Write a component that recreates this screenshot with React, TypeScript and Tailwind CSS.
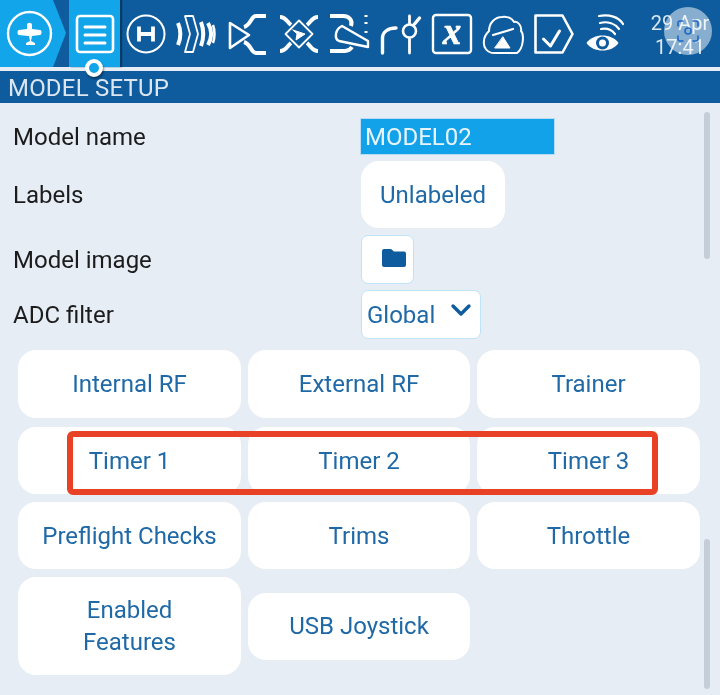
import React from "react";

const Ic = ({ children }: { children: React.ReactNode }) => (
  <div className="w-[51px] h-[67px] flex items-center justify-center shrink-0">
    <svg width="42" height="42" viewBox="0 0 42 42" fill="none" stroke="white" strokeWidth="2.4" strokeLinecap="round" strokeLinejoin="round">
      {children}
    </svg>
  </div>
);

const Btn = ({ t, cls = "h-[67px]" }: { t: React.ReactNode; cls?: string }) => (
  <div className={`bg-white rounded-[18px] flex items-center justify-center text-center text-[#1f69a6] text-[24px] leading-[32px] ${cls}`}>{t}</div>
);

const Row = ({ label, h, children }: { label: string; h: string; children: React.ReactNode }) => (
  <div className={`flex items-center ${h}`}>
    <div className="w-[361px] pl-[13px] pt-[1px] text-[#1c1c1c] text-[24px]">{label}</div>
    {children}
  </div>
);

export default function App() {
  return (
    <div className="relative w-[720px] h-[695px] overflow-hidden bg-[#e6edf5] blur-[0.6px] font-['Roboto',sans-serif]">
      <div className="flex h-[67px] bg-[#0e5c9d]">
        <div className="w-[69px] h-[67px] shrink-0 relative">
          <svg width="69" height="67" viewBox="0 0 69 67">
            <path d="M0 0H53L66 33L53 67H0Z" fill="#12a5ea" />
            <circle cx="29.5" cy="33.5" r="21.5" fill="none" stroke="white" strokeWidth="2.4" />
            <path d="M27 25c0-3 5-3 5 0v4l8 1c2 0 2 5 0 5l-8 1-1 5 4 2v2H26v-2l4-2-1-5-1-0-9-1c-2 0-2-5 0-5l8-1z" fill="white" />
          </svg>
        </div>
        <div className="w-[51px] h-[67px] shrink-0 bg-[#12a5ea] flex items-center justify-center shadow-[2px_0_1px_#0a3a63]">
          <svg width="40" height="40" viewBox="0 0 40 40" fill="none" stroke="white" strokeWidth="2.6" strokeLinecap="round" strokeLinejoin="round">
            <rect x="2" y="2" width="36" height="36" rx="3" />
            <path d="M10 13H30M10 21H30M10 29H30" strokeWidth="3" />
          </svg>
        </div>
        <Ic>
          <circle cx="21" cy="21" r="18.5" strokeWidth="2" />
          <path d="M14 13.5V28.5M28 13.5V28.5M14 21H28" strokeWidth="3.8" strokeLinecap="butt" />
        </Ic>
        <Ic>
          <path d="M2 10C5 17 5 25 2 32" strokeWidth="4" strokeLinecap="butt" />
          <path d="M9 3H17L22 21L17 39H9L14 21Z" strokeWidth="1.8" />
          <path d="M25 9C28 17 28 25 25 33M32 10C36 17 36 25 32 32" strokeWidth="4" strokeLinecap="butt" />
          <path d="M37 12C39 17 39 25 37 30" strokeWidth="2.5" strokeLinecap="butt" />
        </Ic>
        <Ic>
          <path d="M3 10L22 22L3 35Z" strokeWidth="2.6" />
          <path d="M39 3H29C24 3 24 12 17 14M39 40H29C24 40 24 31 17 29" strokeWidth="4" strokeLinecap="butt" />
        </Ic>
        <Ic>
          <path d="M21 7.5L34.5 21L21 34.5L7.5 21Z" strokeWidth="1.8" />
          <path d="M15 17L27 21L18 27L19 21Z" fill="white" strokeWidth="1" />
          <path d="M2 4C8 4 9 9 13 12M40 4C34 4 33 9 29 12M2 38C8 38 9 33 13 30M40 38C34 38 33 33 29 30" strokeWidth="4" strokeLinecap="butt" />
        </Ic>
        <Ic>
          <path d="M1 3H14C20 3 24 7 22 13M1 38H16C19 38 21 37 23 34" strokeWidth="4" strokeLinecap="butt" />
          <path d="M13 13L39 28L39 34L10 28C5 26 6 16 13 13Z" strokeWidth="2.4" />
          <path d="M37 2V4M37 9V11M37 18V20" strokeWidth="3" strokeLinecap="butt" />
        </Ic>
        <Ic>
          <path d="M2.5 40V25C2.5 19 8 15 16 15" strokeWidth="3.4" />
          <circle cx="29.5" cy="18" r="6.5" strokeWidth="2.6" />
          <path d="M29.5 3V10M29.5 26V40" strokeWidth="2.8" />
          <path d="M34.5 11L39.5 5" strokeWidth="3.4" />
        </Ic>
        <Ic>
          <rect x="2" y="2" width="38" height="38" rx="3" strokeWidth="2.4" />
          <text x="21" y="31" textAnchor="middle" fill="white" stroke="white" strokeWidth="0.6" fontFamily="'Liberation Serif',serif" fontWeight="700" fontStyle="italic" fontSize="37">x</text>
        </Ic>
        <Ic>
          <path d="M12 40C5 40 1 34 2 28C2 23 5 20 7 18C7 10 13 4 20 4C26 3 30 6 32 9C36 8 40 13 39 18C42 21 42 35 35 40Z" strokeWidth="2" />
          <path d="M11 22L31 16" strokeWidth="2.2" />
          <path d="M21 24L28 35H13Z" fill="white" strokeWidth="1" />
        </Ic>
        <Ic>
          <path d="M2.5 2.5H29.5L39.5 21L29.5 39.5H2.5Z" strokeWidth="2.6" />
          <path d="M10.5 26L17.5 33L26.5 18" strokeWidth="3" />
        </Ic>
        <Ic>
          <path d="M2.5 30C9 20 28 20 34.5 30C28 40 9 40 2.5 30Z" fill="white" stroke="none" />
          <circle cx="18.5" cy="30" r="6.5" fill="#0e5c9d" stroke="none" />
          <circle cx="18.5" cy="30" r="3.5" fill="white" stroke="none" />
          <path d="M17 16C23 15 28 17 31 21M16 10C24 8 31 11 35 16M15 3C25 1 35 4 39 11" strokeWidth="2.2" />
        </Ic>
        <div className="grow text-white/85 text-[20px] leading-[24px] text-center pt-[11px] pl-[10px]">
          <div>29 Apr</div>
          <div>17:41</div>
        </div>
      </div>
      <div className="h-[4px] bg-[#e6edf5]" />
      <div className="h-[32px] bg-[#0e5c9d] pl-[8px] text-[#dbe6f0] text-[24px] leading-[35px] tracking-[0.2px]">MODEL SETUP</div>

      <div className="pr-[18px] pt-[13px]">
        <Row label="Model name" h="h-[40px]">
          <div className="w-[193px] h-[35px] bg-[#12a2e9] text-[#e8f4fc] text-[24px] leading-[37px] pl-[4px] outline outline-1 outline-[#b8dcf5]">MODEL02</div>
        </Row>
        <div className="h-[5px]" />
        <Row label="Labels" h="h-[67px]">
          <div className="w-[144px] h-[67px] bg-white rounded-[18px] flex items-center justify-center text-[#1f69a6] text-[24px]">Unlabeled</div>
        </Row>
        <div className="h-[6px]" />
        <Row label="Model image" h="h-[50px]">
          <div className="w-[53px] h-[49px] bg-white rounded-[7px] border border-[#bfe3f8] flex items-center pl-[20px]">
            <svg width="24" height="18" viewBox="0 0 24 18" className="mb-[3px] shrink-0">
              <path d="M0 2a2 2 0 012-2h7l3 2.5h10a2 2 0 012 2V16a2 2 0 01-2 2H2a2 2 0 01-2-2z" fill="#0e5c9d" />
            </svg>
          </div>
        </Row>
        <div className="h-[5px]" />
        <Row label="ADC filter" h="h-[50px]">
          <div className="w-[120px] h-[49px] bg-white rounded-[7px] border border-[#bfe3f8] flex items-center justify-between pl-[5px] pr-[8px] text-[#1f69a6] text-[24px]">
            <span className="mt-[2px]">Global</span>
            <svg width="22" height="14" viewBox="0 0 22 14" fill="none" stroke="#0e5c9d" strokeWidth="3.4" strokeLinecap="round" strokeLinejoin="round" className="mb-[8px]">
              <path d="M3 3L11 11L19 3" />
            </svg>
          </div>
        </Row>
      </div>

      <div className="grid grid-cols-[223px_222px_223px] gap-x-[7px] gap-y-[8px] pl-[18px] pt-[11px] items-center">
        <Btn t="Internal RF" cls="h-[68px] mb-[1px]" />
        <Btn t="External RF" cls="h-[68px] mb-[1px]" />
        <Btn t="Trainer" cls="h-[68px] mb-[1px]" />
        <Btn t="Timer 1" />
        <Btn t="Timer 2" />
        <Btn t="Timer 3" />
        <Btn t="Preflight Checks" />
        <Btn t="Trims" />
        <Btn t="Throttle" />
        <Btn t={<>Enabled<br />Features</>} cls="h-[98px]" />
        <Btn t="USB Joystick" />
      </div>

      {/* overlays */}
      <div className="absolute left-[85px] top-[59px] w-[18px] h-[18px] rounded-full bg-[#12a5ea] border-[4px] border-white shadow-[1px_2px_2px_rgba(0,0,0,0.4)]" />
      <div className="absolute left-[67px] top-[431px] w-[591px] h-[64px] rounded-[6px] border-[6px] border-[#e94125]" />
      <div className="absolute left-[704px] top-[112px] w-[6px] h-[147px] rounded-[3px] bg-[#c5ced8]" />
      <div className="absolute left-[704px] top-[539px] w-[6px] h-[150px] rounded-[3px] bg-[#c5ced8]" />
      <div className="absolute left-[664px] top-[7px] w-[48px] h-[48px] rounded-full bg-white/50 flex items-center justify-center">
        <svg width="24" height="24" viewBox="0 0 24 24" fill="none" stroke="#1f69c8" strokeWidth="1.6" strokeLinecap="round">
          <path d="M2 7V4a2 2 0 012-2h3M17 2h3a2 2 0 012 2v3M22 17v3a2 2 0 01-2 2h-3M7 22H4a2 2 0 01-2-2v-3" />
          <circle cx="12" cy="12" r="3" />
        </svg>
      </div>
    </div>
  );
}
